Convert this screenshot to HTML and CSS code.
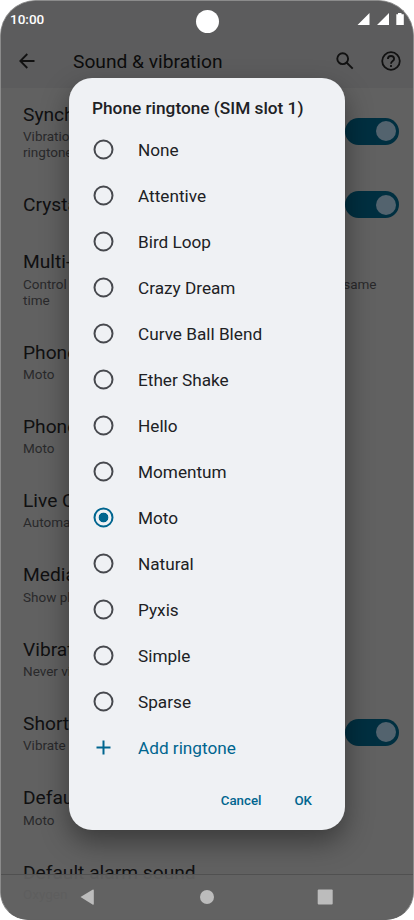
FILE: index.html
```html
<!DOCTYPE html>
<html lang="en">
<head>
    <meta charset="UTF-8">
    <meta name="viewport" content="width=device-width, initial-scale=1.0">
    <title>Sound &amp; vibration</title>
    <link rel="stylesheet" href="styles.css">
</head>
<body>
    <div class="phone">
        <!-- Status bar and app bar -->
        <header>
            <div class="status">
                <span>10:00</span>
                <svg width="47" height="14" viewBox="0 0 47 14" fill="#fff">
                    <path d="M0.5 13L12.5 1V13ZM20 13L32 1V13Z"/>
                    <path d="M39.300 2.2H41V1H44.500V2.200H46.800V13H39.300Z"/>
                </svg>
            </div>
            <div class="appbar">
                <svg width="18" height="18" viewBox="0 0 18 18" fill="none" stroke="#111" stroke-width="1.8">
                    <path d="M16.500 9H2.500M9.300 2L2.300 9L9.300 16"/>
                </svg>
                <h1>Sound &amp; vibration</h1>
                <svg class="search" width="18" height="18" viewBox="0 0 18 18" fill="none" stroke="#111" stroke-width="1.900">
                    <circle cx="6.700" cy="6.700" r="5.400"/>
                    <path d="M10.500 10.500L16.700 16.700"/>
                </svg>
                <svg width="20" height="20" viewBox="0 0 20 20" fill="none" stroke="#111" stroke-width="1.800">
                    <circle cx="10" cy="10" r="8.800"/>
                    <path d="M6.900 8C6.900 6.200 8.200 5 10 5S13.100 6.200 13.100 8C13.100 10 10 10.200 10 12.700"/>
                    <path d="M10 14V16"/>
                </svg>
            </div>
        </header>
        <div class="camera"></div>

        <!-- Settings list -->
        <main>
            <div class="item">
                <div><h2>Synch</h2><p>Vibration<br>ringtone</p></div>
                <span class="toggle"></span>
            </div>
            <div class="item">
                <div><h2>Crystal</h2></div>
                <span class="toggle"></span>
            </div>
            <div class="item">
                <div><h2>Multi-</h2><p class="wide"><span>Control</span><span>same</span></p><p>time</p></div>
            </div>
            <div class="item"><div><h2>Phone</h2><p>Moto</p></div></div>
            <div class="item"><div><h2>Phone</h2><p>Moto</p></div></div>
            <div class="item"><div><h2>Live Ca</h2><p>Automatic</p></div></div>
            <div class="item"><div><h2>Media</h2><p>Show play</p></div></div>
            <div class="item"><div><h2>Vibrate</h2><p>Never vib</p></div></div>
            <div class="item">
                <div><h2>Shortc</h2><p>Vibrate</p></div>
                <span class="toggle"></span>
            </div>
            <div class="item"><div><h2>Default</h2><p>Moto</p></div></div>
            <div class="item"><div><h2>Default alarm sound</h2><p>Oxygen</p></div></div>
        </main>

        <nav>
            <svg width="414" height="45" viewBox="0 0 414 45" fill="#bcbcbc">
                <path d="M80.500 22L92.500 14.800Q93.800 14.200 93.800 15.500V28.800Q93.800 30.300 92.500 29.500Z"/>
                <circle cx="207" cy="22" r="7"/>
                <rect x="317.700" y="14.500" width="15" height="15" rx="1"/>
            </svg>
        </nav>

        <!-- Ringtone picker -->
        <div class="dialog">
            <h3>Phone ringtone (SIM slot 1)</h3>
            <ul>
                <li><i class="radio"></i>None</li>
                <li><i class="radio"></i>Attentive</li>
                <li><i class="radio"></i>Bird Loop</li>
                <li><i class="radio"></i>Crazy Dream</li>
                <li><i class="radio"></i>Curve Ball Blend</li>
                <li><i class="radio"></i>Ether Shake</li>
                <li><i class="radio"></i>Hello</li>
                <li><i class="radio"></i>Momentum</li>
                <li><i class="radio checked"></i>Moto</li>
                <li><i class="radio"></i>Natural</li>
                <li><i class="radio"></i>Pyxis</li>
                <li><i class="radio"></i>Simple</li>
                <li><i class="radio"></i>Sparse</li>
                <li class="add"><i class="plus"></i>Add ringtone</li>
            </ul>
            <div class="actions">
                <button>Cancel</button>
                <button>OK</button>
            </div>
        </div>
    </div>
</body>
</html>
```
FILE: styles.css
```css
* {
    margin: 0;
    padding: 0;
    box-sizing: border-box;
}

body {
    background: #fff;
    font-family: Roboto, sans-serif;
}

.phone {
    position: relative;
    width: 414px;
    height: 920px;
    overflow: hidden;
    background: #616161;
    border: 1px solid #8b8b8b;
    border-bottom-color: #616161;
    border-radius: 36px 36px 28px 28px;
}

header {
    height: 87px;
    background: #5c5c5d;
}

.status {
    display: flex;
    justify-content: space-between;
    align-items: center;
    height: 36px;
    padding: 0 9px;
    color: #fff;
    font-size: 13.5px;
    font-weight: 500;
}

.appbar {
    display: flex;
    align-items: center;
    height: 48px;
    padding: 0 12px 0 17px;
}

.appbar h1 {
    margin-left: 37px;
    font-size: 19.2px;
    font-weight: 400;
    color: #0c0c0c;
}

.search {
    margin: 0 27px 0 auto;
}

.camera {
    position: absolute;
    left: 194.5px;
    top: 9px;
    width: 23px;
    height: 23px;
    border-radius: 50%;
    background: #fff;
}

main {
    margin-top: -1.6px;
}

.item {
    display: flex;
    justify-content: space-between;
    align-items: center;
    padding: 16.5px 14px 16.5px 22px;
    white-space: nowrap;
}

.item h2 {
    font-size: 19.2px;
    line-height: 24px;
    font-weight: 400;
    color: #101011;
}

.item p {
    font-size: 13.5px;
    line-height: 16px;
    color: #29292b;
}

.item h2 + p {
    margin-top: 1.3px;
}

.wide {
    display: flex;
    justify-content: space-between;
    width: 353.5px;
}

.toggle {
    flex: none;
    width: 54px;
    height: 27px;
    margin: -3px 0 -2px;
    padding: 3.5px 3.5px;
    border-radius: 14px;
    background: #002f40;
}

.toggle::after {
    content: "";
    display: block;
    width: 20px;
    height: 20px;
    margin-left: auto;
    border-radius: 50%;
    background: #53636e;
}

/* sits over the end of the list, which shows through a little */
nav {
    position: absolute;
    left: -1px;
    right: -1px;
    bottom: -1px;
    height: 46px;
    border-top: 1px solid #505050;
    background: rgba(98, 98, 98, 0.93);
}

.dialog {
    position: absolute;
    left: 68px;
    top: 77px;
    width: 276px;
    height: 752px;
    border-radius: 23px;
    background: #eff1f4;
    box-shadow: 0 12px 28px rgba(0, 0, 0, 0.4);
    color: #202124;
}

.dialog h3 {
    padding: 18px 0 0 23px;
    font-size: 17.25px;
    line-height: 24px;
    font-weight: 500;
    height: 49px;
}

.dialog ul {
    list-style: none;
}

.dialog li {
    display: flex;
    align-items: center;
    height: 46px;
    padding-left: 24px;
    font-size: 17.2px;
}

.radio {
    width: 20px;
    height: 20px;
    margin-right: 25px;
    border: 2px solid #47494e;
    border-radius: 50%;
    transform: translate(0.5px, -0.5px);
}

.radio.checked {
    border-color: #00658f;
    background: radial-gradient(circle, #00658f 4.5px, transparent 5.2px);
}

.dialog .add {
    color: #00658f;
}

.plus {
    width: 14px;
    height: 14px;
    margin: 0 28px 0 3px;
    transform: translate(0.5px, -0.5px);
    background:
        linear-gradient(#00658f, #00658f) center / 14px 2px no-repeat,
        linear-gradient(#00658f, #00658f) center / 2px 14px no-repeat;
}

.actions {
    display: flex;
    justify-content: flex-end;
    gap: 33px;
    padding: 19px 33px 0 0;
}

.actions button {
    border: none;
    background: none;
    font-family: inherit;
    font-size: 13.3px;
    line-height: 21px;
    font-weight: 500;
    color: #00658f;
}
```
